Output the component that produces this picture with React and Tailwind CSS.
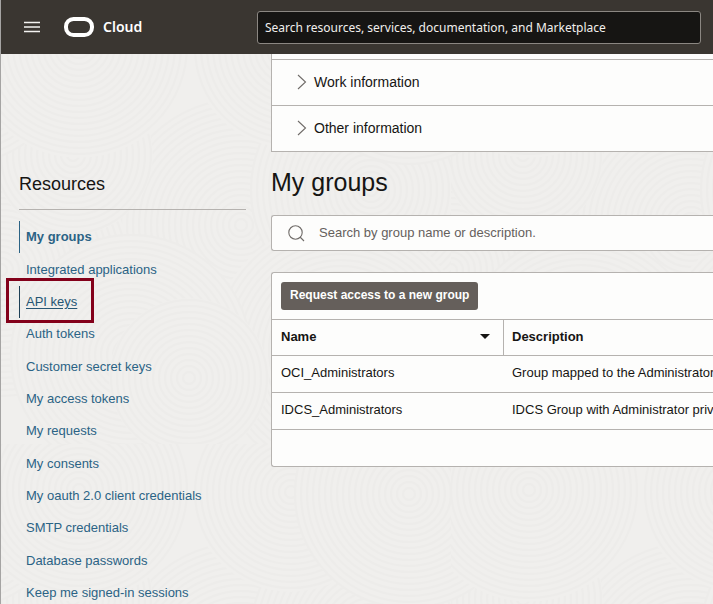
import React from "react";

const resources = [
  "My groups",
  "Integrated applications",
  "API keys",
  "Auth tokens",
  "Customer secret keys",
  "My access tokens",
  "My requests",
  "My consents",
  "My oauth 2.0 client credentials",
  "SMTP credentials",
  "Database passwords",
  "Keep me signed-in sessions",
];

const groups = [
  { name: "OCI_Administrators", description: "Group mapped to the Administrators" },
  { name: "IDCS_Administrators", description: "IDCS Group with Administrator privileges" },
];

// Overlapping rippled discs of one background tile, painted back to front.
const discs = [
  [240, 225, 130],
  [0, 270, 130],
  [450, 270, 130],
  [370, 190, 120],
  [340, 350, 130],
  [130, 355, 120],
  [188, 378, 80],
  [72, 155, 80],
  [290, 48, 100],
  [-42, 50, 115],
  [408, 50, 115],
  [78, 46, 112],
];

function Backdrop() {
  return (
    <svg className="absolute inset-0 -z-10 h-full w-full" aria-hidden="true">
      <defs>
        <pattern id="ripples" width="450" height="444" patternUnits="userSpaceOnUse">
          <rect width="450" height="444" fill="#f0efed" />
          {discs.map(([x, y, r]) => (
            <g key={`${x}-${y}`}>
              <circle cx={x} cy={y} r={r} fill="#f0efed" />
              {Array.from({ length: Math.floor(r / 6) }, (_, i) => (
                <circle key={i} cx={x} cy={y} r={(i + 1) * 6} fill="none" stroke="#edecea" strokeWidth="2" />
              ))}
            </g>
          ))}
        </pattern>
      </defs>
      <rect width="100%" height="100%" fill="url(#ripples)" />
    </svg>
  );
}

function Header() {
  return (
    <header className="flex h-[54px] items-center bg-[#3a3631] pr-3 pl-[23px] font-['Noto_Sans',sans-serif] text-white">
      <button type="button" aria-label="Menu" className="shrink-0">
        <svg width="16" height="12" viewBox="0 0 16 12" stroke="#f4f3f1" strokeWidth="1.4">
          <path d="M0 1.5H16M0 6H16M0 10.5H16" />
        </svg>
      </button>
      <a href="#home" className="ml-6 flex items-center gap-[9px]">
        <svg width="30" height="20" viewBox="0 0 30 20" fill="none" aria-hidden="true">
          <rect x="2" y="2" width="26" height="16" rx="7.5" stroke="#fff" strokeWidth="4" />
        </svg>
        <span className="w-[154px] text-sm font-semibold">Cloud</span>
      </a>
      <input
        type="text"
        aria-label="Search resources"
        placeholder="Search resources, services, documentation, and Marketplace"
        className="h-[33px] min-w-0 flex-1 rounded-[3px] border border-[#8b8782] bg-[#161513] px-[7px] text-[12px] text-white placeholder:text-[#f1efed]"
      />
    </header>
  );
}

function Sidebar() {
  return (
    <nav aria-label="Resources" className="w-[227px] shrink-0 pt-[118px]">
      <h2 className="border-b border-[#b5b2af] pb-3 text-lg leading-[25px]">Resources</h2>
      <ul className="mt-[11px] grid h-[388px] auto-rows-fr text-[13px] text-[#2b6385]">
        {resources.map((item) => (
          <li key={item} className="relative flex">
            <a
              href="#section"
              className={
                item === "My groups"
                  ? "flex items-center border-l border-[#2b6385] pl-[6px] font-bold"
                  : item === "API keys"
                    ? "flex items-center border-l border-[#1d3f56] pl-[6px] text-[#265573] underline underline-offset-2"
                    : "flex items-center border-l border-transparent pl-[6px]"
              }
            >
              {item}
            </a>
            {item === "API keys" && (
              <span className="pointer-events-none absolute -top-2 -left-[13px] h-[45px] w-[88px] border-3 border-[#83001a]" />
            )}
          </li>
        ))}
      </ul>
    </nav>
  );
}

function Accordion() {
  return (
    <div className="border-b border-l border-[#b5b2af] bg-[#fdfdfc] pt-[5px]">
      {["Work information", "Other information"].map((title) => (
        <button
          key={title}
          type="button"
          className="flex h-[46px] w-full items-center gap-[7px] border-t border-[#b5b2af] pb-[2px] pl-[25px] text-left text-sm"
        >
          <svg width="10" height="16" viewBox="0 0 10 16" fill="none" stroke="#6f6b68" strokeWidth="1.1" aria-hidden="true">
            <path d="M1 1L8.5 8L1 15" />
          </svg>
          {title}
        </button>
      ))}
    </div>
  );
}

function GroupsPanel() {
  return (
    <section className="mt-[21px] overflow-hidden rounded-l-[3px] border border-r-0 border-[#b5b2af] bg-[#fdfdfc]">
      <div className="px-[9px] py-[9px]">
        <button
          type="button"
          className="flex h-7 items-center rounded-[3px] bg-[#655f5b] px-[9px] pb-[2px] text-[12px] font-bold text-white"
        >
          Request access to a new group
        </button>
      </div>
      <table className="w-full table-fixed border-separate border-spacing-0 text-[13px] whitespace-nowrap">
        <thead>
          <tr className="h-9 text-left">
            <th className="w-[232px] border-t border-r border-[#b5b2af] px-[9px] pb-[2px]">
              <span className="flex items-center justify-between pr-1">
                Name
                <svg width="10" height="5" viewBox="0 0 10 5" fill="#161513" aria-hidden="true">
                  <path d="M0 0H10L5 5Z" />
                </svg>
              </span>
            </th>
            <th className="border-t border-[#b5b2af] px-2 pb-[2px]">Description</th>
          </tr>
        </thead>
        <tbody>
          {groups.map((group) => (
            <tr key={group.name} className="h-[37px]">
              <td className="border-t border-[#b5b2af] px-[9px] pb-[2px]">{group.name}</td>
              <td className="border-t border-[#b5b2af] pb-[2px] pl-2">{group.description}</td>
            </tr>
          ))}
          <tr className="h-[37px]">
            <td colSpan={2} className="border-t border-[#b5b2af]" />
          </tr>
        </tbody>
      </table>
    </section>
  );
}

export default function App() {
  return (
    <div className="relative isolate h-screen overflow-hidden border-l border-[#a5a4a3] font-['Liberation_Sans',Arial,sans-serif] text-[#161513]">
      <Backdrop />
      <Header />
      <div className="flex gap-[25px] pl-[18px]">
        <Sidebar />
        <main className="min-w-0 flex-1">
          <Accordion />
          <h1 className="mt-[14px] text-[25px] leading-8">My groups</h1>
          <label className="mt-[17px] flex h-9 items-center gap-[14px] rounded-l-[3px] border border-r-0 border-[#b5b2af] bg-[#fdfdfc] pl-4">
            <svg width="17" height="17" viewBox="0 0 17 17" fill="none" stroke="#6f6b68" strokeWidth="1.1" aria-hidden="true">
              <circle cx="7.5" cy="7.5" r="6.7" />
              <path d="M12 12L16 16" />
            </svg>
            <input
              type="search"
              aria-label="Search groups"
              placeholder="Search by group name or description."
              className="min-w-0 flex-1 bg-transparent text-[13px] placeholder:text-[#65605c]"
            />
          </label>
          <GroupsPanel />
        </main>
      </div>
    </div>
  );
}
